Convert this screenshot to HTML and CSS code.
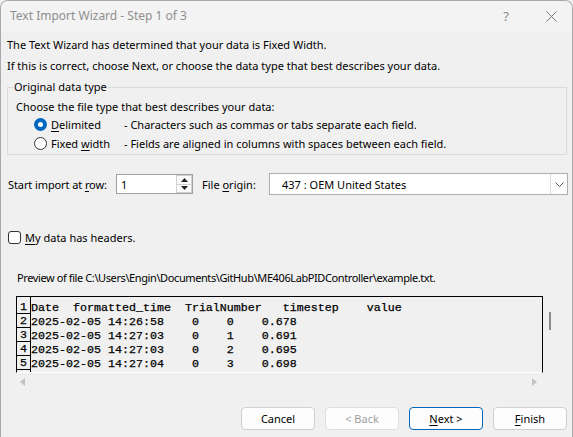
FILE: index.html
```html
<!DOCTYPE html>
<html>
<head>
<meta charset="utf-8">
<link rel="stylesheet" href="styles.css">
</head>
<body>
<div class="window">
  <div class="titlebar">
    <span class="title">Text Import Wizard - Step 1 of 3</span>
    <span class="tb-help">?</span>
    <span class="tb-close">
      <svg width="11" height="11" viewBox="0 0 11 11"><path d="M0.5 0.5 L10.5 10.5 M10.5 0.5 L0.5 10.5" stroke="#7a7a7a" stroke-width="1" fill="none"/></svg>
    </span>
  </div>
  <div class="content">
    <p class="line line1">The Text Wizard has determined that your data is Fixed Width.</p>
    <p class="line line2">If this is correct, choose Next, or choose the data type that best describes your data.</p>

    <fieldset class="group">
      <legend class="legend">Original data type</legend>
      <div class="choose">Choose the file type that best describes your data:</div>
      <div class="radio-row first">
        <span class="radio checked"></span>
        <span class="rlabel"><u>D</u>elimited</span>
        <span class="rdesc">- Characters such as commas or tabs separate each field.</span>
      </div>
      <div class="radio-row">
        <span class="radio"></span>
        <span class="rlabel">Fixed <u>w</u>idth</span>
        <span class="rdesc">- Fields are aligned in columns with spaces between each field.</span>
      </div>
    </fieldset>

    <div class="import-row">
      <span class="lbl-start">Start import at <u>r</u>ow:</span>
      <div class="spin">
        <span class="spin-val">1</span>
        <div class="spin-btns">
          <span class="spin-btn"><svg width="7" height="4" viewBox="0 0 7 4"><path d="M0 4 L3.5 0 L7 4 Z" fill="#222"/></svg></span>
          <span class="spin-btn"><svg width="7" height="4" viewBox="0 0 7 4"><path d="M0 0 L3.5 4 L7 0 Z" fill="#222"/></svg></span>
        </div>
      </div>
      <span class="lbl-origin">File <u>o</u>rigin:</span>
      <div class="combo">
        <span class="combo-val">437 : OEM United States</span>
        <span class="combo-btn"><svg width="9" height="5" viewBox="0 0 9 5"><path d="M0.5 0.5 L4.5 4.5 L8.5 0.5" stroke="#555" stroke-width="1" fill="none"/></svg></span>
      </div>
    </div>

    <div class="check-row">
      <span class="checkbox"></span>
      <span class="clabel"><u>M</u>y data has headers.</span>
    </div>

    <div class="preview-label">Preview of file C:\Users\Engin\Documents\GitHub\ME406LabPIDController\example.txt.</div>

    <div class="preview-wrap">
      <div class="preview-main">
        <div class="preview-box">
          <div class="nums">
            <div class="num">1</div>
            <div class="num">2</div>
            <div class="num">3</div>
            <div class="num">4</div>
            <div class="num">5</div>
          </div>
          <pre class="data">Date  formatted_time  TrialNumber   timestep    value
2025-02-05 14:26:58    0    0    0.678
2025-02-05 14:27:03    0    1    0.691
2025-02-05 14:27:03    0    2    0.695
2025-02-05 14:27:04    0    3    0.698</pre>
        </div>
        <div class="hscroll">
          <svg width="5" height="8" viewBox="0 0 5 8"><path d="M5 0 L0 4 L5 8 Z" fill="#c2c2c2"/></svg>
          <svg width="5" height="8" viewBox="0 0 5 8"><path d="M0 0 L5 4 L0 8 Z" fill="#c2c2c2"/></svg>
        </div>
      </div>
      <div class="vscroll"><span class="thumb"></span></div>
    </div>

    <div class="buttons">
      <button class="btn">Cancel</button>
      <button class="btn disabled">&lt; Back</button>
      <button class="btn default"><u>N</u>ext &gt;</button>
      <button class="btn"><u>F</u>inish</button>
    </div>
  </div>
</div>
</body>
</html>
```

FILE: styles.css
```css
* { box-sizing: border-box; }
html, body { margin: 0; padding: 0; background: #f0f0f0; }
body {
  font-family: "Noto Sans", "Open Sans", sans-serif;
  font-size: 11px;
  color: #000;
}
u { text-decoration-thickness: 1px; text-underline-offset: 2px; }

.window {
  width: 573px;
  height: 437px;
  border: 1px solid #a9a9a9;
  border-bottom: none;
  border-radius: 8px 8px 0 0;
  background: #f0f0f0;
  overflow: hidden;
  display: flex;
  flex-direction: column;
}

.titlebar {
  height: 30px;
  flex: none;
  background: #f3f3f3;
  display: flex;
  align-items: center;
  padding-left: 9px;
}
.title { color: #8f8f8f; flex: 1; line-height: 16px; font-size: 12px; }
.tb-help { color: #8a8a8a; width: 20px; text-align: center; margin-right: 30px; font-size: 13px; }
.tb-close { width: 11px; height: 11px; margin-right: 15px; display: flex; }

.content {
  padding: 0 5px 0 6px;
  display: flex;
  flex-direction: column;
}

.line { margin: 0; line-height: 16px; white-space: nowrap; }
.line1 { margin-top: 6px; }
.line2 { margin-top: 5px; }

.group {
  margin: 5px 0 0 0;
  padding: 0 0 3px 5px;
  width: 560px;
  border: 1px solid #dadada;
  min-width: 0;
}
.legend { padding: 0 1px; line-height: 16px; }
.choose { margin: 4px 0 0 3px; line-height: 16px; }

.radio-row {
  display: flex;
  align-items: center;
  height: 16px;
  margin-top: 3px;
  margin-left: 21px;
}
.radio-row.first { margin-top: 1px; }
.radio {
  width: 13px;
  height: 13px;
  border-radius: 50%;
  border: 1px solid #333;
  background: #fff;
  flex: none;
}
.radio.checked {
  border: none;
  background: #0067c0;
  display: flex;
  align-items: center;
  justify-content: center;
}
.radio.checked::after {
  content: "";
  width: 5px;
  height: 5px;
  border-radius: 50%;
  background: #fff;
}
.rlabel { width: 73px; margin-left: 4px; white-space: nowrap; }
.rdesc { white-space: nowrap; }

.import-row {
  display: flex;
  align-items: center;
  height: 22px;
  margin-top: 18px;
}
.lbl-start { width: 109px; flex: none; white-space: nowrap; padding-left: 1px; letter-spacing: -0.1px; }
.spin {
  width: 77px;
  height: 20px;
  border: 1px solid #a0a0a0;
  background: #fff;
  display: flex;
  align-items: center;
  flex: none;
}
.spin-val { flex: 1; padding-left: 4px; }
.spin-btns {
  width: 16px;
  height: 18px;
  display: flex;
  flex-direction: column;
}
.spin-btn {
  flex: 1;
  display: flex;
  align-items: center;
  justify-content: center;
  border: 1px solid #d2d2d2;
  background: #fafafa;
}
.spin-btn + .spin-btn { border-top: none; }
.lbl-origin { width: 67px; margin-left: 9px; flex: none; white-space: nowrap; }
.combo {
  width: 299px;
  height: 22px;
  border: 1px solid #adadad;
  background: #fff;
  display: flex;
  align-items: center;
  flex: none;
}
.combo-val { flex: 1; padding-left: 12px; }
.combo-btn {
  width: 17px;
  height: 20px;
  border-left: 1px solid #dcdcdc;
  display: flex;
  align-items: center;
  justify-content: center;
}

.check-row {
  display: flex;
  align-items: center;
  height: 16px;
  margin-top: 34px;
  padding-left: 1px;
}
.checkbox {
  width: 13px;
  height: 13px;
  border: 1px solid #333;
  border-radius: 3px;
  background: #fff;
  flex: none;
}
.clabel { margin-left: 4px; }

.preview-label {
  margin-top: 25px;
  margin-left: 10px;
  line-height: 16px;
  white-space: nowrap;
  letter-spacing: -0.4px;
}

.preview-wrap {
  display: flex;
  margin-top: 10px;
  margin-left: 9px;
}
.preview-main { width: 527px; flex: none; }
.preview-box {
  height: 77px;
  border: 1px solid #000;
  border-bottom: 1px solid #fff;
  display: flex;
  overflow: hidden;
  background: #f0f0f0;
}
.nums {
  width: 14px;
  border-right: 1px solid #000;
  flex: none;
  padding-top: 3px;
}
.num {
  height: 14px;
  border-bottom: 1px solid #000;
  font-family: "Liberation Mono", "Courier New", monospace;
  font-size: 11.67px;
  line-height: 14px;
  text-align: center;
  -webkit-text-stroke: 0.25px #000;
}
.data {
  margin: 0;
  padding-top: 4px;
  font-family: "Liberation Mono", "Courier New", monospace;
  font-size: 11.67px;
  line-height: 14px;
  color: #000;
  -webkit-text-stroke: 0.25px #000;
}
.hscroll {
  height: 17px;
  display: flex;
  align-items: center;
  justify-content: space-between;
  padding: 0 6px 0 4px;
}
.vscroll {
  width: 18px;
  height: 77px;
  padding: 16px 0 0 6px;
}
.thumb {
  display: block;
  width: 2px;
  height: 18px;
  background: #8a8a8a;
}

.buttons {
  display: flex;
  justify-content: flex-end;
  gap: 10px;
  margin-top: 17px;
}
.btn {
  width: 74px;
  height: 23px;
  border: 1px solid #d0d0d0;
  border-radius: 4px;
  background: #fdfdfd;
  font-family: "Noto Sans", "Open Sans", sans-serif;
  font-size: 11px;
  color: #000;
  padding: 0;
  line-height: 16px;
}
.btn.disabled { color: #9d9d9d; border-color: #dedede; }
.btn.default { border-color: #0067c0; }
```
